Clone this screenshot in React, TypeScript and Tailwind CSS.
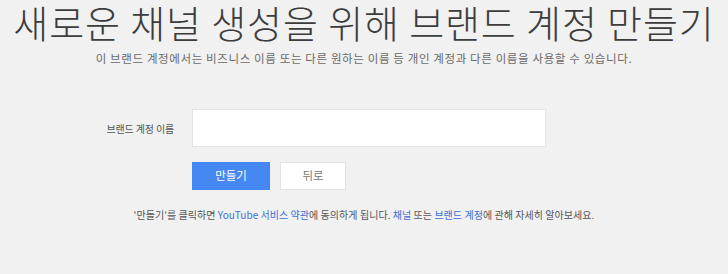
import React from 'react';

const KR = "font-['Noto_Sans_CJK_KR','Noto_Sans',sans-serif]";

export default function App() {
  return (
    <div className={`min-h-screen w-full bg-[#f1f1f1] ${KR}`}>
      {/* Heading */}
      <h1 className="text-center text-[38px] font-light leading-[44px] tracking-[0.9px] text-[#3c3c3c]">
        새로운 채널 생성을 위해 브랜드 계정 만들기
      </h1>
      <p className="mt-[6px] text-center text-[11.5px] leading-[16px] tracking-[0.62px] text-[#6a6a6a]">
        이 브랜드 계정에서는 비즈니스 이름 또는 다른 원하는 이름 등 개인 계정과 다른 이름을 사용할 수 있습니다.
      </p>

      {/* Form */}
      <div className="mt-[43px] grid grid-cols-[192px_354px] gap-y-[15px]">
        <label className="self-center pr-[18px] text-right text-[10px] tracking-[-0.15px] text-[#555]">
          브랜드 계정 이름
        </label>
        <input
          type="text"
          className="h-[38px] border border-[#e4e4e4] bg-white px-2 text-sm outline-none"
        />
        <div />
        <div className="flex gap-[10px]">
          <button className="h-[28px] w-[78px] bg-[#4688f1] text-[11.5px] text-white">
            만들기
          </button>
          <button className="h-[28px] w-[66px] border border-[#e2e2e2] bg-white text-[11.5px] text-[#777]">
            뒤로
          </button>
        </div>
      </div>

      {/* Footer note */}
      <p className="mt-[18px] text-center text-[10px] leading-[14px] tracking-[0.05px] text-[#555]">
        '만들기'를 클릭하면 <a className="text-[#3b6fd6]">YouTube 서비스 약관</a>에 동의하게 됩니다.{' '}
        <a className="text-[#3b6fd6]">채널</a> 또는 <a className="text-[#3b6fd6]">브랜드 계정</a>에 관해
        자세히 알아보세요.
      </p>
    </div>
  );
}
